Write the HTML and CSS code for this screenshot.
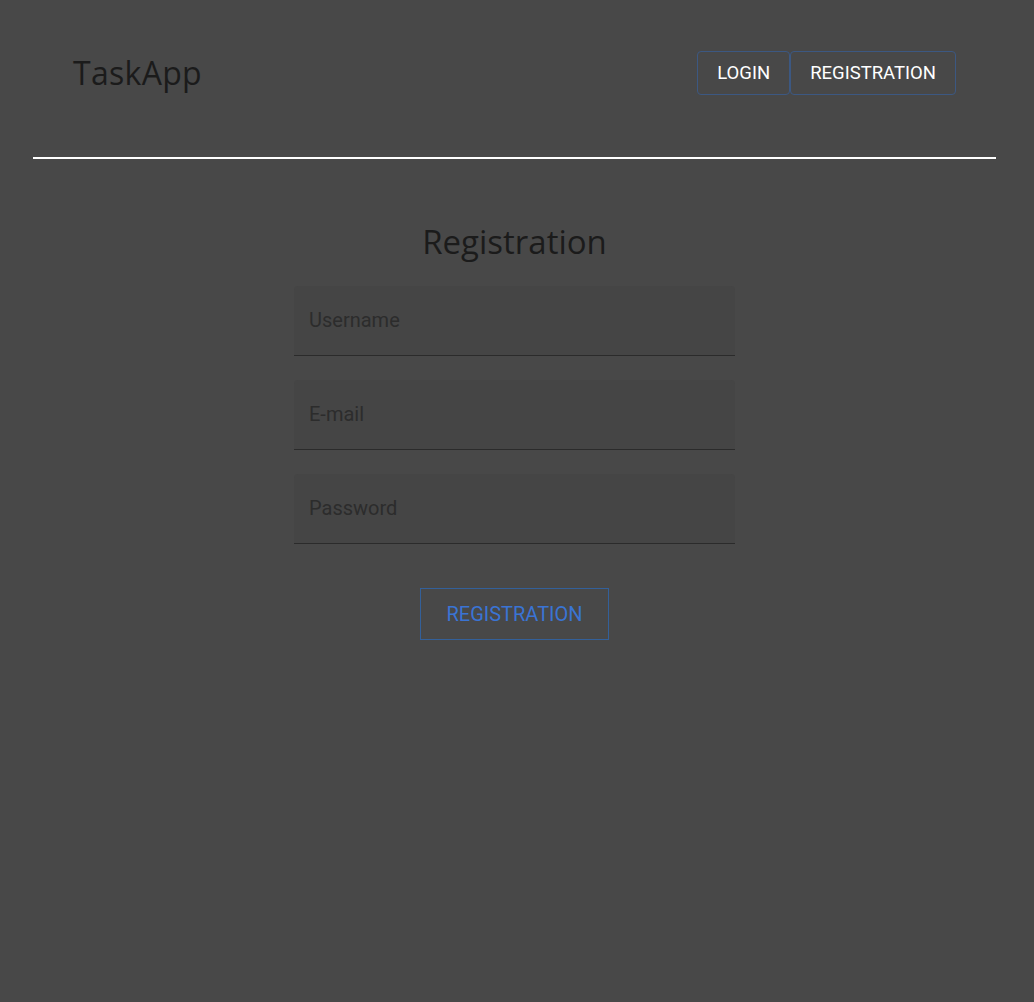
FILE: index.html
```html
<!DOCTYPE html>
<html lang="en">
<head>
<meta charset="utf-8">
<title>TaskApp</title>
<link rel="stylesheet" href="styles.css">
</head>
<body>
<div class="page">
  <header class="header">
    <div class="brand">TaskApp</div>
    <nav class="nav">
      <button class="nav-btn">Login</button>
      <button class="nav-btn">Registration</button>
    </nav>
  </header>
  <hr class="divider">
  <main class="main">
    <h1 class="title">Registration</h1>
    <form class="form">
      <div class="field"><span class="field-label">Username</span></div>
      <div class="field"><span class="field-label">E-mail</span></div>
      <div class="field"><span class="field-label">Password</span></div>
      <button type="button" class="submit">Registration</button>
    </form>
  </main>
</div>
</body>
</html>
```
FILE: styles.css
```css
html, body {
  margin: 0;
  padding: 0;
  background: #484848;
  height: 100%;
}
body {
  font-family: Roboto, "Liberation Sans", sans-serif;
}
.page {
  margin: 0 38px 0 33px;
}
.header {
  box-sizing: border-box;
  height: 157px;
  padding: 51px 40px 0 40px;
  display: flex;
  justify-content: space-between;
  align-items: flex-start;
}
.brand {
  font-family: "Open Sans", sans-serif;
  font-size: 32px;
  line-height: 44px;
  color: #1b1b1b;
  letter-spacing: 0.3px;
}
.nav {
  display: flex;
}
.nav-btn {
  box-sizing: border-box;
  height: 44px;
  padding: 0 19px;
  background: transparent;
  border: 1px solid #3c5882;
  border-radius: 4px;
  color: #ffffff;
  font-family: Roboto, sans-serif;
  font-size: 18.5px;
  font-weight: 400;
  text-transform: uppercase;
}
.divider {
  margin: 0;
  border: 0;
  height: 2px;
  background: #ffffff;
}
.main {
  display: flex;
  flex-direction: column;
  align-items: center;
  padding-top: 60px;
}
.title {
  margin: 0 0 21px 0;
  font-family: "Open Sans", sans-serif;
  font-weight: 400;
  font-size: 33px;
  line-height: 46px;
  color: #1b1b1b;
}
.form {
  width: 441px;
  display: flex;
  flex-direction: column;
  align-items: center;
  gap: 24px;
}
.field {
  box-sizing: border-box;
  width: 100%;
  height: 70px;
  background: #454545;
  border-radius: 4px 4px 0 0;
  border-bottom: 1px solid #2b2b2b;
  padding: 22px 15px 0;
}
.field-label {
  font-size: 20px;
  color: #2c2c2c;
  line-height: 24px;
}
.submit {
  margin-top: 20px;
  box-sizing: border-box;
  width: 189px;
  height: 52px;
  background: transparent;
  border: 1px solid #33609a;
  border-radius: 0;
  color: #3a74d4;
  font-family: Roboto, sans-serif;
  font-size: 20px;
  font-weight: 400;
  text-transform: uppercase;
}
```
